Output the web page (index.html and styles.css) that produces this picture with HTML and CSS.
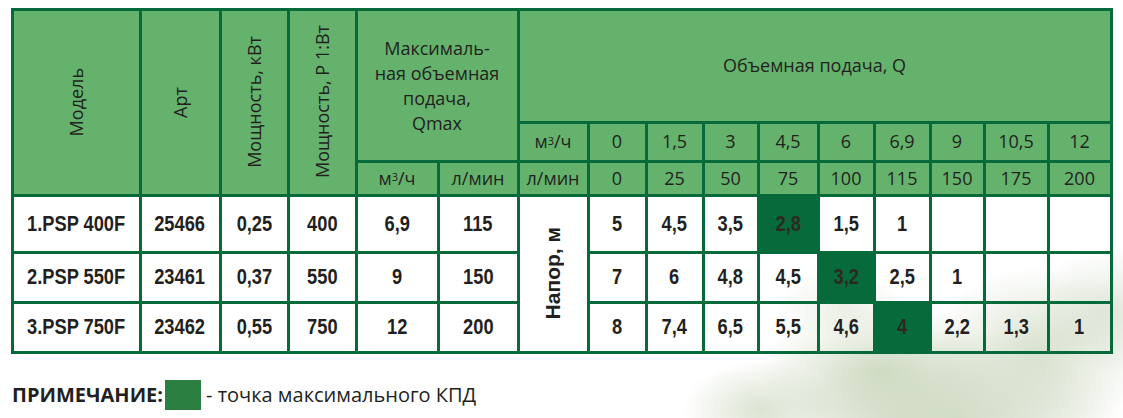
FILE: index.html
```html
<!DOCTYPE html>
<html lang="ru">
<head>
<meta charset="utf-8">
<title>PSP</title>
<link rel="stylesheet" href="styles.css">
</head>
<body>
<div class="page">
  <div class="spec">
    <div class="h v r3"><span>Модель</span></div>
    <div class="h v r3"><span>Арт</span></div>
    <div class="h v r3"><span>Мощность, кВт</span></div>
    <div class="h v r3"><span>Мощность, Р 1:Вт</span></div>
    <div class="h qmax c2 r2">Максималь-<br>ная объемная<br>подача,<br>Qmax</div>
    <div class="h c10">Объемная подача, Q</div>

    <div class="h">м<sup>3</sup>/ч</div>
    <div class="h">0</div>
    <div class="h">1,5</div>
    <div class="h">3</div>
    <div class="h">4,5</div>
    <div class="h">6</div>
    <div class="h">6,9</div>
    <div class="h">9</div>
    <div class="h">10,5</div>
    <div class="h">12</div>

    <div class="h">м<sup>3</sup>/ч</div>
    <div class="h">л/мин</div>
    <div class="h">л/мин</div>
    <div class="h">0</div>
    <div class="h">25</div>
    <div class="h">50</div>
    <div class="h">75</div>
    <div class="h">100</div>
    <div class="h">115</div>
    <div class="h">150</div>
    <div class="h">175</div>
    <div class="h">200</div>

    <div class="d"><span>1.PSP 400F</span></div>
    <div class="d"><span>25466</span></div>
    <div class="d"><span>0,25</span></div>
    <div class="d"><span>400</span></div>
    <div class="d"><span>6,9</span></div>
    <div class="d"><span>115</span></div>
    <div class="d dv r3"><span>Напор, м</span></div>
    <div class="d"><span>5</span></div>
    <div class="d"><span>4,5</span></div>
    <div class="d"><span>3,5</span></div>
    <div class="d hl"><span>2,8</span></div>
    <div class="d"><span>1,5</span></div>
    <div class="d"><span>1</span></div>
    <div class="d"></div>
    <div class="d"></div>
    <div class="d"></div>

    <div class="d"><span>2.PSP 550F</span></div>
    <div class="d"><span>23461</span></div>
    <div class="d"><span>0,37</span></div>
    <div class="d"><span>550</span></div>
    <div class="d"><span>9</span></div>
    <div class="d"><span>150</span></div>
    <div class="d"><span>7</span></div>
    <div class="d"><span>6</span></div>
    <div class="d"><span>4,8</span></div>
    <div class="d"><span>4,5</span></div>
    <div class="d hl"><span>3,2</span></div>
    <div class="d"><span>2,5</span></div>
    <div class="d"><span>1</span></div>
    <div class="d"></div>
    <div class="d"></div>

    <div class="d"><span>3.PSP 750F</span></div>
    <div class="d"><span>23462</span></div>
    <div class="d"><span>0,55</span></div>
    <div class="d"><span>750</span></div>
    <div class="d"><span>12</span></div>
    <div class="d"><span>200</span></div>
    <div class="d"><span>8</span></div>
    <div class="d"><span>7,4</span></div>
    <div class="d"><span>6,5</span></div>
    <div class="d"><span>5,5</span></div>
    <div class="d"><span>4,6</span></div>
    <div class="d hl"><span>4</span></div>
    <div class="d"><span>2,2</span></div>
    <div class="d"><span>1,3</span></div>
    <div class="d"><span>1</span></div>
  </div>

  <p class="note"><b class="note-label">ПРИМЕЧАНИЕ:</b><span class="swatch"></span><span class="note-text">- точка максимального КПД</span></p>
</div>
</body>
</html>
```

FILE: styles.css
```css
:root {
  --tree:
    radial-gradient(ellipse 110px 70px at 760px 410px, rgba(196, 210, 180, 0.55), rgba(196, 210, 180, 0) 70%),
    radial-gradient(ellipse 170px 100px at 880px 370px, rgba(188, 204, 170, 0.6), rgba(188, 204, 170, 0) 70%),
    radial-gradient(ellipse 160px 120px at 1040px 350px, rgba(192, 206, 176, 0.6), rgba(192, 206, 176, 0) 70%),
    radial-gradient(ellipse 240px 130px at 960px 420px, rgba(186, 202, 168, 0.55), rgba(186, 202, 168, 0) 70%),
    radial-gradient(ellipse 110px 90px at 1110px 310px, rgba(206, 216, 196, 0.55), rgba(206, 216, 196, 0) 70%),
    radial-gradient(ellipse 90px 50px at 840px 305px, rgba(214, 222, 204, 0.45), rgba(214, 222, 204, 0) 70%),
    radial-gradient(ellipse 260px 110px at 900px 420px, rgba(220, 226, 212, 0.6), rgba(220, 226, 212, 0) 80%);
}

html, body {
  margin: 0;
  padding: 0;
}

body {
  width: 1123px;
  height: 418px;
  overflow: hidden;
  color: #231f20;
  font-family: "Open Sans", "Noto Sans", sans-serif;
  background: var(--tree), #ffffff;
  background-attachment: fixed;
}

.page {
  padding: 7.5px 0 0 10.5px;
}

.spec {
  display: grid;
  width: max-content;
  grid-template-columns: 125px 77px 65px 65px 79px 77px 67px 55px 54px 52px 57px 53px 53px 51px 61px 60px;
  grid-template-rows: 110px 36px 31px 54px 47px 47px;
  gap: 3px;
  padding: 3px;
  background: #066a3b;
}

.h {
  display: flex;
  align-items: center;
  justify-content: center;
  text-align: center;
  background: #64b26c;
  font-size: 18px;
  line-height: 25px;
}

.h sup {
  font-size: 11px;
  line-height: 0;
  position: relative;
  top: -1px;
}

.v span {
  writing-mode: vertical-rl;
  transform: rotate(180deg);
  white-space: nowrap;
}

.r3 { grid-row: span 3; }
.r2 { grid-row: span 2; }
.c2 { grid-column: span 2; }
.c10 { grid-column: span 10; }

.qmax {
  padding-top: 2px;
}

.d {
  display: flex;
  align-items: center;
  justify-content: center;
  background: var(--tree), #ffffff;
  background-attachment: fixed;
  font-family: "Liberation Sans", Arial, sans-serif;
  font-weight: bold;
  font-size: 22px;
  color: #231f20;
}

.d span {
  display: inline-block;
  white-space: nowrap;
  transform: scaleX(0.83);
}

.d.dv span {
  writing-mode: vertical-rl;
  transform: rotate(180deg);
  font-size: 21px;
}

.d.hl {
  background: #066a3b;
  color: #2c2a20;
}

.note {
  display: flex;
  align-items: center;
  margin: 26px 0 0 1.5px;
  height: 30px;
  font-size: 20px;
}

.note-label {
  font-weight: bold;
}

.swatch {
  display: inline-block;
  width: 36px;
  height: 30px;
  margin: 0 5px 0 2px;
  background: #2b7f40;
}

.note-text {
  font-weight: normal;
}
```
